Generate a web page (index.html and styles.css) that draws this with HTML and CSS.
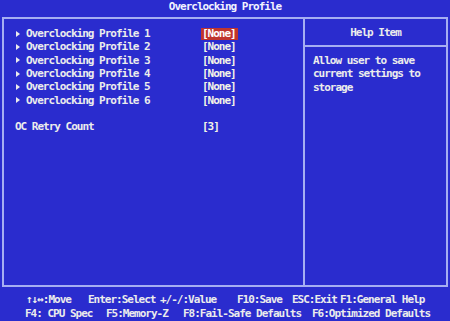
FILE: index.html
```html
<!DOCTYPE html>
<html lang="en">
<head>
  <meta charset="UTF-8">
  <title>Overclocking Profile</title>
  <link rel="stylesheet" href="styles.css">
</head>
<body>

  <!-- Title -->
  <div class="title">Overclocking Profile</div>

  <!-- Setup frame -->
  <div class="frame">
    <div class="main">
      <div class="row"><span class="arrow"></span><span class="label">Overclocking Profile 1</span><span class="value selected">[None]</span></div>
      <div class="row"><span class="arrow"></span><span class="label">Overclocking Profile 2</span><span class="value">[None]</span></div>
      <div class="row"><span class="arrow"></span><span class="label">Overclocking Profile 3</span><span class="value">[None]</span></div>
      <div class="row"><span class="arrow"></span><span class="label">Overclocking Profile 4</span><span class="value">[None]</span></div>
      <div class="row"><span class="arrow"></span><span class="label">Overclocking Profile 5</span><span class="value">[None]</span></div>
      <div class="row"><span class="arrow"></span><span class="label">Overclocking Profile 6</span><span class="value">[None]</span></div>
      <div class="row"></div>
      <div class="row"><span class="label wide">OC Retry Count</span><span class="value">[3]</span></div>
    </div>

    <div class="help">
      <div class="help-head">Help Item</div>
      <div class="help-text">Allow user to save current settings to storage</div>
    </div>
  </div>

  <!-- Key legend -->
  <div class="footer">
    <div class="keys keys-top">
      <span>↑↓↔:Move</span>
      <span>Enter:Select</span>
      <span>+/-/:Value</span>
      <span>F10:Save</span>
      <span>ESC:Exit</span>
      <span>F1:General Help</span>
    </div>
    <div class="keys keys-bottom">
      <span>F4: CPU Spec</span>
      <span>F5:Memory-Z</span>
      <span>F8:Fail-Safe Defaults</span>
      <span>F6:Optimized Defaults</span>
    </div>
  </div>

</body>
</html>
```

FILE: styles.css
```css
* {
  margin: 0;
  padding: 0;
  box-sizing: border-box;
}

body {
  width: 450px;
  height: 321px;
  overflow: hidden;
  background-color: #2a2cce;
  color: #ececec;
  font-family: 'DejaVu Sans Mono', 'Liberation Mono', monospace;
  font-weight: bold;
  font-size: 11px;
  letter-spacing: -1px;
  white-space: nowrap;
}

/* Title */
.title {
  height: 17px;
  line-height: 14px;
  text-align: center;
  color: #f2f2ff;
}

/* Frame */
.frame {
  display: flex;
  height: 270px;
  margin: 0 2px;
  border: 2px solid #a6aef2;
}

.main {
  width: 301px;
  padding: 8px 0 0 11px;
  border-right: 2px solid #a6aef2;
}

.row {
  display: grid;
  grid-template-columns: 11px 176px auto;
  align-items: center;
  height: 13.33px;
}

.arrow {
  width: 0;
  height: 0;
  margin-left: 1px;
  border-left: 4px solid #ececec;
  border-top: 3px solid transparent;
  border-bottom: 3px solid transparent;
}

.label.wide {
  grid-column: 1 / 3;
}

.value {
  color: #f4f4e6;
  justify-self: start;
}

.value.selected {
  margin-left: -1px;
  padding: 0 2px 0 1px;
  line-height: 12px;
  background-color: #bf352e;
  color: #ffffff;
}

/* Help panel */
.help {
  flex: 1;
}

.help-head {
  height: 28px;
  line-height: 28px;
  text-align: center;
  border-bottom: 2px solid #a6aef2;
}

.help-text {
  padding: 7px 8px 0 8px;
  line-height: 13.33px;
  white-space: normal;
}

/* Footer */
.footer {
  padding-top: 6px;
}

.keys {
  display: grid;
  height: 13.5px;
  line-height: 13.5px;
}

.keys-top {
  padding-left: 26px;
  grid-template-columns: 62px 72px 77px 55px 48px auto;
}

.keys-bottom {
  padding-left: 25px;
  grid-template-columns: 81px 77px 129px auto;
}
```
